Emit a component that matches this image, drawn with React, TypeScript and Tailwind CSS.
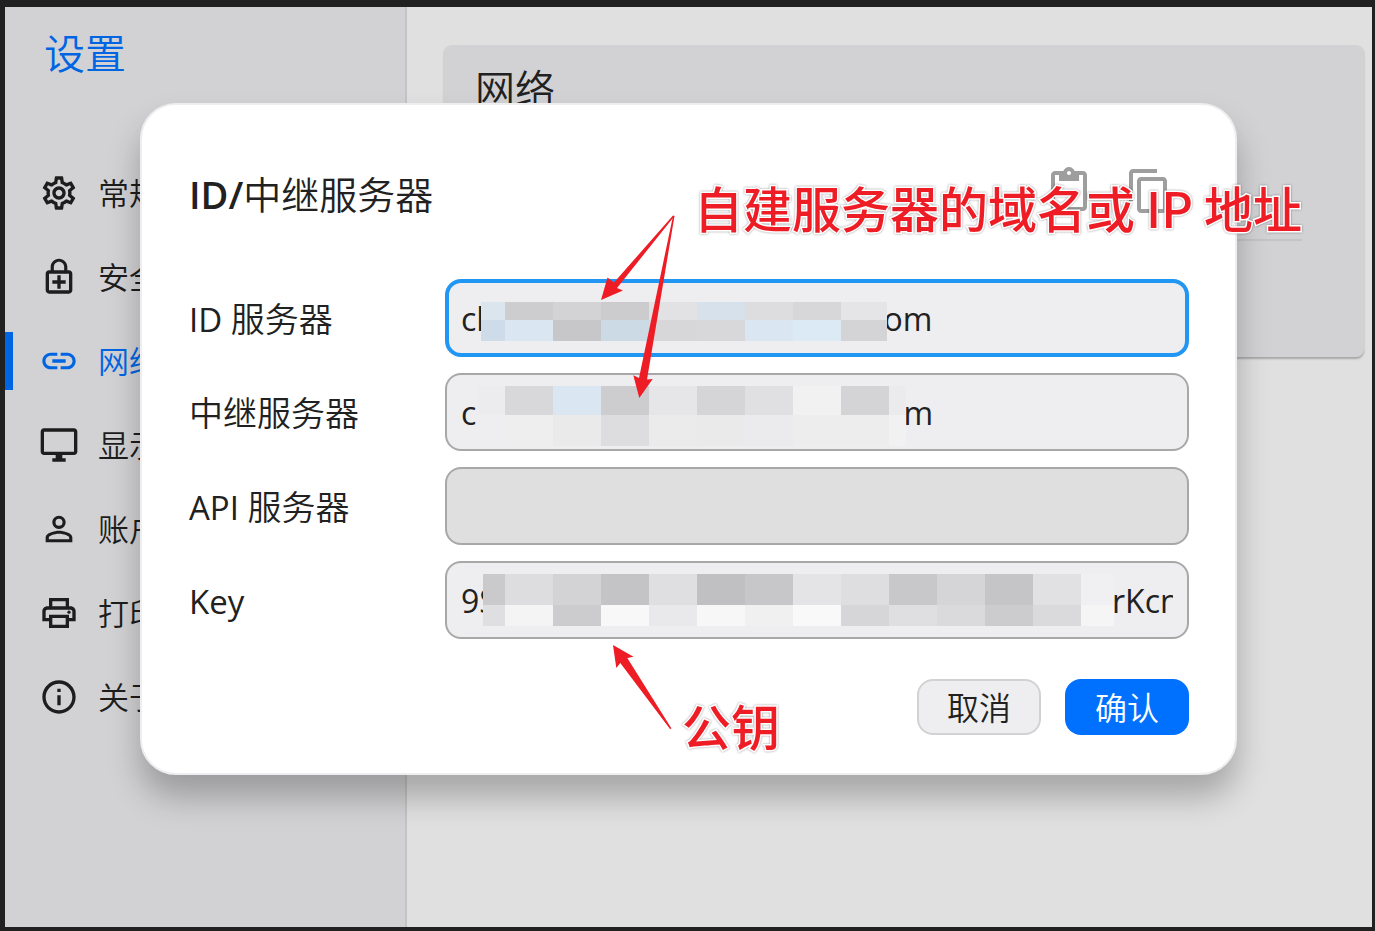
import { useState } from "react";
import type { IconType } from "react-icons";
import {
  MdContentCopy,
  MdContentPaste,
  MdLink,
  MdOutlineDesktopWindows,
  MdOutlineEnhancedEncryption,
  MdOutlineInfo,
  MdOutlinePersonOutline,
  MdOutlinePrint,
  MdOutlineSettings,
} from "react-icons/md";

interface NavItem {
  label: string;
  icon: IconType;
}

const navItems: NavItem[] = [
  { label: "常规", icon: MdOutlineSettings },
  { label: "安全", icon: MdOutlineEnhancedEncryption },
  { label: "网络", icon: MdLink },
  { label: "显示", icon: MdOutlineDesktopWindows },
  { label: "账户", icon: MdOutlinePersonOutline },
  { label: "打印机", icon: MdOutlinePrint },
  { label: "关于", icon: MdOutlineInfo },
];

interface MosaicData {
  // column edges and row edges, relative to the left/top of the field
  cols: number[];
  rows: number[];
  colors: string[][];
}

const idMosaic: MosaicData = {
  cols: [36, 60, 108, 156, 204, 252, 300, 348, 396, 442],
  rows: [23, 41, 62],
  colors: [
    ["#dae5ee", "#cdcdcf", "#d3d3d5", "#cccccf", "#e2e2e4", "#d7e1eb", "#dddddf", "#d7d7d9", "#e5e5e7"],
    ["#cddce8", "#dae7f2", "#c7c7c9", "#ccdae6", "#d7d7d9", "#d8d8da", "#dae7f2", "#dceaf6", "#d4d4d6"],
  ],
};

const relayMosaic: MosaicData = {
  cols: [33, 60, 108, 156, 204, 252, 300, 348, 396, 444, 461],
  rows: [13, 42, 73],
  colors: [
    ["#ececee", "#d8d8da", "#dae7f2", "#cdcdcf", "#e6e6e8", "#d5d5d7", "#e0e0e2", "#f1f1f1", "#d4d4d6", "#ebebed"],
    ["#eeeef0", "#eeeeee", "#eaeaea", "#dddddf", "#ebebeb", "#eaeaea", "#ebebed", "#ededed", "#ededed", "#f1f1f1"],
  ],
};

const keyMosaic: MosaicData = {
  cols: [38, 60, 108, 156, 204, 252, 300, 348, 396, 444, 492, 540, 588, 636, 669],
  rows: [13, 44, 65],
  colors: [
    ["#cacacc", "#dddddf", "#d3d3d5", "#c4c4c6", "#dfdfe1", "#c0c0c2", "#c7c7c9", "#e4e4e6", "#dedee0", "#c8c8ca", "#d5d5d7", "#c5c5c7", "#e1e1e3", "#f0f0f2"],
    ["#dfdfe1", "#f4f4f4", "#cccccf", "#f8f8f8", "#e9e9eb", "#f7f7f7", "#f0f0f0", "#f9f9f9", "#d6d6d8", "#dfdfe1", "#dadadc", "#ccccce", "#dadadc", "#f5f5f5"],
  ],
};

function Mosaic({ cols, rows, colors }: MosaicData) {
  return (
    <svg
      className="pointer-events-none absolute top-0 left-0 h-[78px] w-[744px]"
      shapeRendering="crispEdges"
      aria-hidden="true"
    >
      {colors.map((line, r) =>
        line.map((fill, c) => (
          <rect
            key={`${r}-${c}`}
            x={cols[c]}
            y={rows[r]}
            width={cols[c + 1] - cols[c]}
            height={rows[r + 1] - rows[r]}
            fill={fill}
          />
        ))
      )}
    </svg>
  );
}

interface FieldProps {
  id: string;
  // latin part of the label, set in a heavier weight than the chinese part
  prefix?: string;
  label?: string;
  value: string;
  inputClass: string;
  mosaic?: MosaicData;
  onChange: (value: string) => void;
}

function Field({ id, prefix, label, value, inputClass, mosaic, onChange }: FieldProps) {
  return (
    <div className="flex items-center">
      <label htmlFor={id} className="w-64 shrink-0 pt-0.5 text-[34px] leading-10 whitespace-pre">
        {prefix && <span className="text-[33px] font-normal">{prefix}</span>}
        {label}
      </label>
      <div className="relative min-w-0 flex-1">
        <input
          id={id}
          type="text"
          autoComplete="off"
          spellCheck={false}
          value={value}
          onChange={(e) => onChange(e.target.value)}
          className={`block h-[78px] w-full rounded-2xl text-[32px] font-normal outline-none ${inputClass}`}
        />
        {mosaic && <Mosaic {...mosaic} />}
      </div>
    </div>
  );
}

function Arrows() {
  return (
    <svg
      className="pointer-events-none absolute top-0 left-0 h-[672px] w-[720px]"
      viewBox="142 105 720 672"
      fill="#ee1c25"
      aria-hidden="true"
    >
      <path d="M601 300 607.500 277.500 614 282.500 673 215.500 674.500 216 617 288 623 290.500Z" />
      <path d="M639.300 398 633.300 375.300 639 378 673 216 674.500 216 647 379.500 652.700 379Z" />
      <path d="M613 645 633.500 656.700 627.300 658 671.500 728.500 670 729 620.300 663 616.300 668Z" />
    </svg>
  );
}

const noteClass =
  "pointer-events-none absolute whitespace-nowrap font-['Noto_Sans_CJK_SC',sans-serif] text-[49px] leading-[56px] font-medium text-[#ee1c25] [paint-order:stroke_fill] [-webkit-text-stroke:3px_white] [filter:drop-shadow(0_0_1px_rgba(0,0,0,0.4))]";

export default function App() {
  const [active, setActive] = useState("网络");
  const [idServer, setIdServer] = useState("cl" + " ".repeat(48) + "om");
  const [relayServer, setRelayServer] = useState("c" + " ".repeat(51) + "\u200am");
  const [apiServer, setApiServer] = useState("");
  const [key, setKey] = useState("9S" + " ".repeat(74) + "rKcn");

  return (
    <div className="relative flex min-h-screen bg-[#212121] pt-[7px] pr-[3px] pb-1 pl-[5px] font-['Open_Sans','Noto_Sans_CJK_SC',sans-serif] font-[350] text-[#212121]">
      <aside className="w-[402px] shrink-0 border-r-2 border-[#c4c4c5] bg-[#d2d2d4]">
        <h1 className="px-[39px] pt-4 text-[41px] leading-[60px] font-[350] text-[#0065e3]">设置</h1>
        <nav className="mt-17 flex flex-col">
          {navItems.map(({ label, icon: Icon }) => (
            <button
              key={label}
              type="button"
              onClick={() => setActive(label)}
              className={`flex h-21 items-center text-left text-[31px] leading-10 ${
                label === active ? "text-[#0065e3]" : "text-[#1d1d1d]"
              }`}
            >
              <span className={`h-[58px] w-2 ${label === active ? "bg-[#0065e3]" : ""}`} />
              <Icon className="mr-[19px] ml-[26px] size-10" />
              {label}
            </button>
          ))}
        </nav>
      </aside>

      <main className="flex-1 bg-[#e0e0e0] pt-[38px] pr-2 pl-[37px]">
        <section className="h-[312px] rounded-lg bg-[#d2d2d4] px-[31px] pt-3.5 shadow-[0_2px_2px_rgba(0,0,0,0.25)]">
          <h2 className="text-[40px] leading-[60px] font-[350]">网络</h2>
          <hr className="mt-[120px] mr-[31px] border-t-2 border-[#c4c4c5]" />
        </section>
      </main>

      <div className="absolute inset-0 flex items-start pt-[103px] pr-[138px] pl-35">
        <div
          role="dialog"
          aria-labelledby="dialog-title"
          className="relative w-full rounded-[36px] border-2 border-[#eeeef0] bg-white pr-[46px] pb-[38px] pl-[47px] shadow-[0_22px_32px_rgba(0,0,0,0.26)]"
        >
          <header className="mb-0.5 flex h-[172px] items-center">
            <h2 id="dialog-title" className="pt-1.5 text-[38px] leading-[56px] font-[350]">
              <span className="font-semibold">ID/</span>
              中继服务器
            </h2>
            <div className="mr-4 ml-auto flex gap-8 text-[#9e9e9e]">
              <button type="button" aria-label="粘贴">
                <MdContentPaste className="size-12" />
              </button>
              <button type="button" aria-label="复制">
                <MdContentCopy className="size-12" />
              </button>
            </div>
          </header>

          <form className="flex flex-col gap-4" onSubmit={(e) => e.preventDefault()}>
            <Field
              id="id-server"
              prefix="ID "
              label="服务器"
              value={idServer}
              onChange={setIdServer}
              inputClass="border-4 border-[#2196f3] bg-[#eeeef0] px-3"
              mosaic={idMosaic}
            />
            <Field
              id="relay-server"
              label="中继服务器"
              value={relayServer}
              onChange={setRelayServer}
              inputClass="border-2 border-[#a8a8a8] bg-[#eeeef0] px-[14px]"
              mosaic={relayMosaic}
            />
            <Field
              id="api-server"
              prefix="API "
              label="服务器"
              value={apiServer}
              onChange={setApiServer}
              inputClass="border-2 border-[#a8a8a8] bg-[#dfdfdf] px-[14px]"
            />
            <Field
              id="key"
              prefix="Key"
              value={key}
              onChange={setKey}
              inputClass="border-2 border-[#a8a8a8] bg-[#eeeef0] px-[14px]"
              mosaic={keyMosaic}
            />
            <div className="mt-6 flex justify-end gap-6 text-[32px] leading-[48px]">
              <button
                type="button"
                className="h-14 w-31 rounded-2xl border-2 border-[#d2d2d4] bg-[#eeeef0] pt-0.5"
              >
                取消
              </button>
              <button type="submit" className="h-14 w-31 rounded-2xl bg-[#0071ff] pt-0.5 text-white">
                确认
              </button>
            </div>
          </form>

          {/* Callouts */}
          <Arrows />
          <p className={`${noteClass} top-[74px] left-[552px]`}>自建服务器的域名或 IP 地址</p>
          <p className={`${noteClass} top-[592px] left-[540px]`}>公钥</p>
        </div>
      </div>
    </div>
  );
}
